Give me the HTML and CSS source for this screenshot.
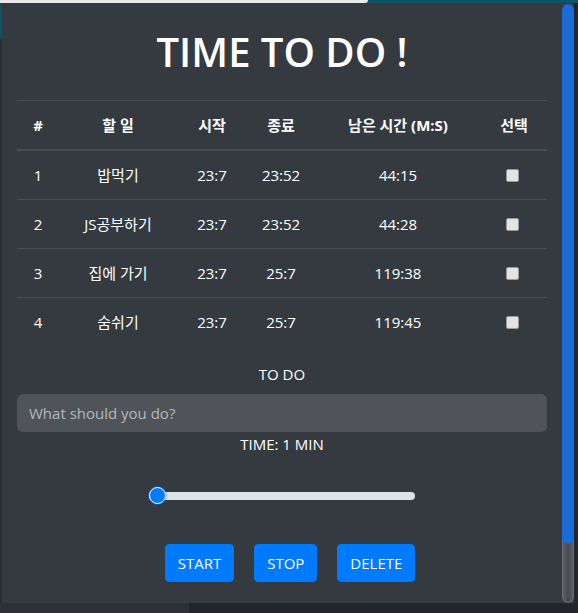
FILE: index.html
```html
<!DOCTYPE html>
<html lang="ko">
<head>
<meta charset="utf-8">
<title>TIME TO DO !</title>
<link rel="stylesheet" href="styles.css">
</head>
<body>
<div class="topbar"><div class="tab-light"></div><div class="tab-teal"></div></div>
<div class="stage">
  <div class="edge"></div>
  <div class="popup">
    <main class="content">
      <h1 class="title">TIME TO DO !</h1>
      <table class="tbl">
        <colgroup>
          <col class="c1"><col class="c2"><col class="c3"><col class="c4"><col class="c5"><col class="c6">
        </colgroup>
        <thead>
          <tr><th>#</th><th>할 일</th><th>시작</th><th>종료</th><th>남은 시간 (M:S)</th><th>선택</th></tr>
        </thead>
        <tbody>
          <tr><td>1</td><td>밥먹기</td><td>23:7</td><td>23:52</td><td>44:15</td><td><input type="checkbox" class="chk"></td></tr>
          <tr><td>2</td><td>JS공부하기</td><td>23:7</td><td>23:52</td><td>44:28</td><td><input type="checkbox" class="chk"></td></tr>
          <tr><td>3</td><td>집에 가기</td><td>23:7</td><td>25:7</td><td>119:38</td><td><input type="checkbox" class="chk"></td></tr>
          <tr><td>4</td><td>숨쉬기</td><td>23:7</td><td>25:7</td><td>119:45</td><td><input type="checkbox" class="chk"></td></tr>
        </tbody>
      </table>
      <label class="lbl" for="todo">TO DO</label>
      <input id="todo" class="todo" type="text" placeholder="What should you do?">
      <div class="lbl time">TIME: 1 MIN</div>
      <div class="slider-row"><input type="range" class="range" min="1" max="120" value="1"></div>
      <div class="btns">
        <button class="btn">START</button>
        <button class="btn">STOP</button>
        <button class="btn">DELETE</button>
      </div>
    </main>
    <div class="scrollbar"><div class="thumb"></div><div class="track"></div></div>
  </div>
  <div class="rightbg"></div>
</div>
<div class="bottom"><div class="bottom-left"></div><div class="bottom-right"></div></div>
</body>
</html>
```

FILE: styles.css
```css
html, body {
  margin: 0;
  padding: 0;
}
body {
  width: 578px;
  height: 613px;
  overflow: hidden;
  background: #24272b;
  font-family: "Open Sans", "Noto Sans CJK KR", sans-serif;
  color: #fff;
}
.topbar {
  display: flex;
  height: 3px;
  background: #0c5566;
}
.tab-light {
  width: 368px;
  background: #e8e9ea;
  border-radius: 0 0 3px 0;
}
.tab-teal {
  flex: 1;
}
.stage {
  display: flex;
  height: 600px;
}
.edge {
  width: 2px;
  background: linear-gradient(to bottom, #0e5262 0, #0e5262 36px, #2a2d32 36px);
}
.rightbg {
  flex: 1;
  background: #23262a;
}
.popup {
  width: 572px;
  display: flex;
  background: #343a40;
}
.content {
  flex: 1;
  padding: 0 15px;
  display: flex;
  flex-direction: column;
}
.title {
  margin: 25px 0 24px;
  font-size: 40px;
  line-height: 48px;
  font-weight: 600;
  text-align: center;
}
.tbl {
  width: 530px;
  table-layout: fixed;
  border-collapse: collapse;
  font-size: 15px;
  margin-bottom: 16px;
}
.c1 { width: 42px; }
.c2 { width: 118px; }
.c3 { width: 70px; }
.c4 { width: 68px; }
.c5 { width: 166px; }
.c6 { width: 66px; }
.tbl th, .tbl td {
  padding: 12px 0;
  line-height: 24px;
  text-align: center;
  border-top: 1px solid #454d55;
  white-space: nowrap;
}
.tbl th {
  font-weight: 700;
  border-bottom: 2px solid #454d55;
}
.tbl td {
  font-weight: 400;
}
.chk {
  appearance: none;
  -webkit-appearance: none;
  width: 13px;
  height: 13px;
  margin: 0 3px 3px 0;
  vertical-align: middle;
  background: #e3e3e3;
  border: 1px solid #9a9a9a;
  border-radius: 2px;
}
.lbl {
  display: block;
  text-align: center;
  font-size: 15px;
  line-height: 24px;
  margin-bottom: 8px;
}
.todo {
  box-sizing: border-box;
  width: 530px;
  height: 38px;
  border: none;
  border-radius: 6px;
  background: #505459;
  padding: 0 12px;
  font-family: inherit;
  font-size: 15px;
  color: #fff;
  outline: none;
}
.todo::placeholder {
  color: #b3b7bb;
}
.time {
  margin-bottom: 0;
}
.slider-row {
  display: flex;
  justify-content: center;
  margin-top: 31px;
}
.range {
  -webkit-appearance: none;
  appearance: none;
  width: 266px;
  height: 17px;
  margin: 0;
  background: transparent;
}
.range::-webkit-slider-runnable-track {
  height: 8px;
  background: #dee2e6;
  border-radius: 4px;
}
.range::-webkit-slider-thumb {
  -webkit-appearance: none;
  width: 17px;
  height: 17px;
  margin-top: -4.5px;
  border-radius: 50%;
  background: #007bff;
  border: 1px solid #fff;
  box-sizing: border-box;
  box-shadow: 0 0 0 1px rgba(0, 123, 255, 0.45);
}
.btns {
  display: flex;
  justify-content: center;
  gap: 20px;
  margin-top: 40px;
  padding-left: 16px;
}
.btn {
  height: 38px;
  padding: 0 12px;
  border: 1px solid #007bff;
  border-radius: 4px;
  background: #007bff;
  color: #fff;
  font-family: inherit;
  font-size: 15px;
  line-height: 24px;
}
.scrollbar {
  width: 12px;
  display: flex;
  flex-direction: column;
  padding-top: 1px;
}
.thumb {
  position: relative;
  z-index: 1;
  height: 540px;
  background: #1a6ad8;
  border-radius: 6px;
}
.track {
  position: relative;
  z-index: 0;
  flex: 1;
  margin-top: -6px;
  box-sizing: border-box;
  border: 1px solid #6a6d72;
  border-top: none;
  background: linear-gradient(to right, #5c5f64, #46494e 50%, #5c5f64);
  border-radius: 0 0 6px 6px;
}
.bottom {
  display: flex;
  height: 10px;
}
.bottom-left {
  width: 189px;
  background: #2d3035;
}
.bottom-right {
  flex: 1;
  background: #222529;
}
```
